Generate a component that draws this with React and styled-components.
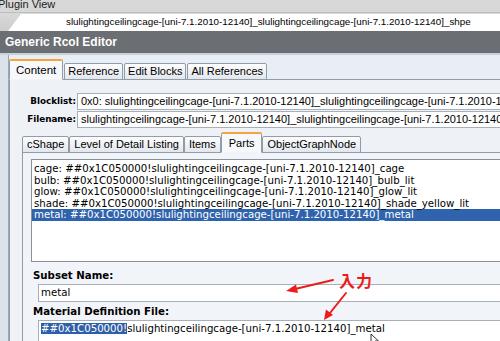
import React from 'react'
import styled, { createGlobalStyle } from 'styled-components'

const GlobalStyle = createGlobalStyle`
  html, body { margin: 0; padding: 0; background: #e9eef4; }
  body { overflow: hidden; }
`

const Screen = styled.div`
  position: relative;
  width: 500px;
  height: 341px;
  overflow: hidden;
  display: flex;
  flex-direction: column;
  font-family: "Liberation Sans", Arial, sans-serif;
  color: #000;
  background: #e9eef4;
`

const TitleBar = styled.div`
  height: 12px;
  flex: none;
  background: #d8d8d8;
  border-bottom: 1px solid #bdbdbd;
  font-size: 11px;
  line-height: 9px;
  text-indent: -2px;
  color: #1c1c1c;
  white-space: nowrap;
  overflow: hidden;
`

const DocStrip = styled.div`
  height: 18px;
  flex: none;
  display: flex;
  align-items: flex-end;
  padding-left: 8px;
  background: linear-gradient(#d9d9d9, #cdcdcd);
`

const DocTab = styled.div`
  flex: 1;
  height: 17px;
  padding-left: 58px;
  background: #fff;
  clip-path: polygon(13px 0, 100% 0, 100% 100%, 0 100%);
  font-size: 9.8px;
  line-height: 16px;
  white-space: nowrap;
  overflow: hidden;
`

const Header = styled.div`
  height: 22px;
  flex: none;
  padding-left: 5px;
  background: #6b6e73;
  border-bottom: 2px solid #c9d1da;
  color: #fff;
  font-weight: bold;
  font-size: 12px;
  line-height: 22px;
  white-space: nowrap;
`

const Body = styled.div`
  flex: 1;
  display: flex;
  min-height: 0;
`

const Rail = styled.div`
  width: 8px;
  flex: none;
  background: #dbe2ea;
  border-right: 1px solid #9ba6b3;
`

const Main = styled.div`
  flex: 1;
  min-width: 0;
  display: flex;
  flex-direction: column;
  padding-top: 4px;
`

const TabRow = styled.div`
  display: flex;
  align-items: flex-end;
  gap: ${p => p.$gap}px;
  height: ${p => p.$height}px;
  flex: none;
`

const Tab = styled.div`
  box-sizing: border-box;
  height: ${p => (p.$active ? 21 : 17)}px;
  padding: 0 ${p => (p.$active ? p.$pad + 3 : p.$pad)}px;
  margin-bottom: -1px;
  border: 1px solid #919caa;
  border-bottom: ${p => (p.$active ? '1px solid #f1f4f8' : '1px solid #919caa')};
  border-top: ${p => (p.$active ? '2px solid #f2a53a' : '1px solid #919caa')};
  border-radius: 2px 2px 0 0;
  background: ${p => (p.$active ? '#f6f8fb' : 'linear-gradient(#fdfdfd, #e3e7ec)')};
  font-size: ${p => (p.$big ? 11.5 : 11)}px;
  line-height: ${p => (p.$active ? 18 : 15)}px;
  white-space: nowrap;
  position: relative;
  z-index: ${p => (p.$active ? 2 : 1)};
`

const Panel = styled.div`
  flex: 1;
  min-height: 0;
  display: flex;
  flex-direction: column;
  border: 1px solid #919caa;
  border-right: none;
  border-bottom: none;
  background: ${p => p.$bg};
  padding: ${p => p.$pad};
`

const FieldGrid = styled.div`
  display: grid;
  grid-template-columns: 66px 1fr;
  column-gap: 1px;
  row-gap: 1px;
  padding-top: 13px;
  flex: none;
`

const TopLabel = styled.div`
  font-family: "DejaVu Sans", Verdana, sans-serif;
  font-weight: bold;
  font-size: 8.8px;
  text-align: right;
  line-height: 17px;
  white-space: nowrap;
`

const TopInput = styled.div`
  box-sizing: border-box;
  height: 17px;
  padding-left: 3px;
  border: 1px solid #a7afb9;
  border-right: none;
  background: #fff;
  font-size: 11px;
  line-height: 15px;
  white-space: nowrap;
  overflow: hidden;
`

const InnerWrap = styled.div`
  flex: 1;
  min-height: 0;
  display: flex;
  flex-direction: column;
  padding: 6px 0 0 12px;
`

const ListBox = styled.div`
  box-sizing: border-box;
  height: 103px;
  flex: none;
  padding-top: 3px;
  border: 1px solid #8a9099;
  border-right: none;
  background: #fff;
  font-family: "DejaVu Sans", Verdana, sans-serif;
  font-size: 10.2px;
`

const ListItem = styled.div`
  height: 11.5px;
  line-height: 11.5px;
  padding-left: 2px;
  white-space: nowrap;
  background: ${p => (p.$selected ? '#3063ad' : 'transparent')};
  color: ${p => (p.$selected ? '#fff' : '#000')};
`

const FormLabel = styled.div`
  margin: ${p => p.$top}px 0 0 2px;
  font-family: "DejaVu Sans", Verdana, sans-serif;
  font-weight: bold;
  font-size: 10.2px;
  line-height: 12px;
  white-space: nowrap;
`

const FormInput = styled.div`
  box-sizing: border-box;
  height: ${p => p.$h}px;
  margin: 2px 0 0 7px;
  padding-left: 2px;
  border: 1px solid #a7afb9;
  border-right: none;
  background: #fff;
  font-family: "DejaVu Sans", Verdana, sans-serif;
  font-size: 10.2px;
  line-height: 16px;
  white-space: nowrap;
  overflow: hidden;
  flex: none;
`

const Picked = styled.span`
  background: #2f5fa8;
  color: #fff;
`

const Note = styled.div`
  position: absolute;
  left: 339px;
  top: 271px;
  color: #ee1b1b;
  font-family: "Noto Sans CJK JP", sans-serif;
  font-weight: bold;
  font-size: 16px;
  line-height: 18px;
  letter-spacing: 1px;
`

const Overlay = styled.svg`
  position: absolute;
  left: 0;
  top: 0;
  pointer-events: none;
`

const docName = 'slulightingceilingcage-[uni-7.1.2010-12140]'
const items = ['cage', 'bulb_lit', 'glow_lit', 'shade_yellow_lit', 'metal']
const keys = ['cage', 'bulb', 'glow', 'shade', 'metal']

export default function App() {
  return (
    <Screen>
      <GlobalStyle />
      <TitleBar>Plugin View</TitleBar>
      <DocStrip>
        <DocTab>{`${docName}_${docName}_shpe`}</DocTab>
      </DocStrip>
      <Header>Generic Rcol Editor</Header>
      <Body>
        <Rail />
        <Main>
          <TabRow $height={20} $gap={1}>
            <Tab $active $big $pad={3}>Content</Tab>
            <Tab $pad={3}>Reference</Tab>
            <Tab $pad={3}>Edit Blocks</Tab>
            <Tab $pad={3}>All References</Tab>
          </TabRow>
          <Panel $bg="#eef2f7" $pad="0">
            <FieldGrid>
              <TopLabel>Blocklist:</TopLabel>
              <TopInput>{`0x0: ${docName}_${docName}_shpe`}</TopInput>
              <TopLabel>Filename:</TopLabel>
              <TopInput>{`${docName}_${docName}_shpe`}</TopInput>
            </FieldGrid>
            <InnerWrap>
              <TabRow $height={18} $gap={0}>
                <Tab $pad={4}>cShape</Tab>
                <Tab $pad={4}>Level of Detail Listing</Tab>
                <Tab $pad={4}>Items</Tab>
                <Tab $active $pad={4}>Parts</Tab>
                <Tab $pad={4}>ObjectGraphNode</Tab>
              </TabRow>
              <Panel $bg="#f1f4f8" $pad="6px 0 0 8px">
                <ListBox>
                  {items.map((suffix, i) => (
                    <ListItem key={suffix} $selected={i === 4}>
                      {`${keys[i]}: ##0x1C050000!${docName}_${suffix}`}
                    </ListItem>
                  ))}
                </ListBox>
                <FormLabel $top={8}>Subset Name:</FormLabel>
                <FormInput $h={18}>metal</FormInput>
                <FormLabel $top={4}>Material Definition File:</FormLabel>
                <FormInput $h={22}>
                  <Picked>##0x1C050000!</Picked>
                  {`${docName}_metal`}
                </FormInput>
              </Panel>
            </InnerWrap>
          </Panel>
        </Main>
      </Body>

      <Note>入力</Note>
      <Overlay width="500" height="341" viewBox="0 0 500 341">
        <g stroke="#ee1b1b" strokeWidth="2" fill="#ee1b1b" strokeLinecap="round">
          <line x1="333" y1="280" x2="295" y2="289" />
          <polygon points="286,291 296,284.5 298,293" stroke="none" />
          <line x1="346" y1="293" x2="330" y2="313" />
          <polygon points="324,320 326,309.5 333,315" stroke="none" />
        </g>
        <path d="M371 334 L371 344 L373.5 341.5 L375.5 346 L377 345.3 L375 341 L378.5 341 Z" fill="#fff" stroke="#000" strokeWidth="0.8" />
      </Overlay>
    </Screen>
  )
}
